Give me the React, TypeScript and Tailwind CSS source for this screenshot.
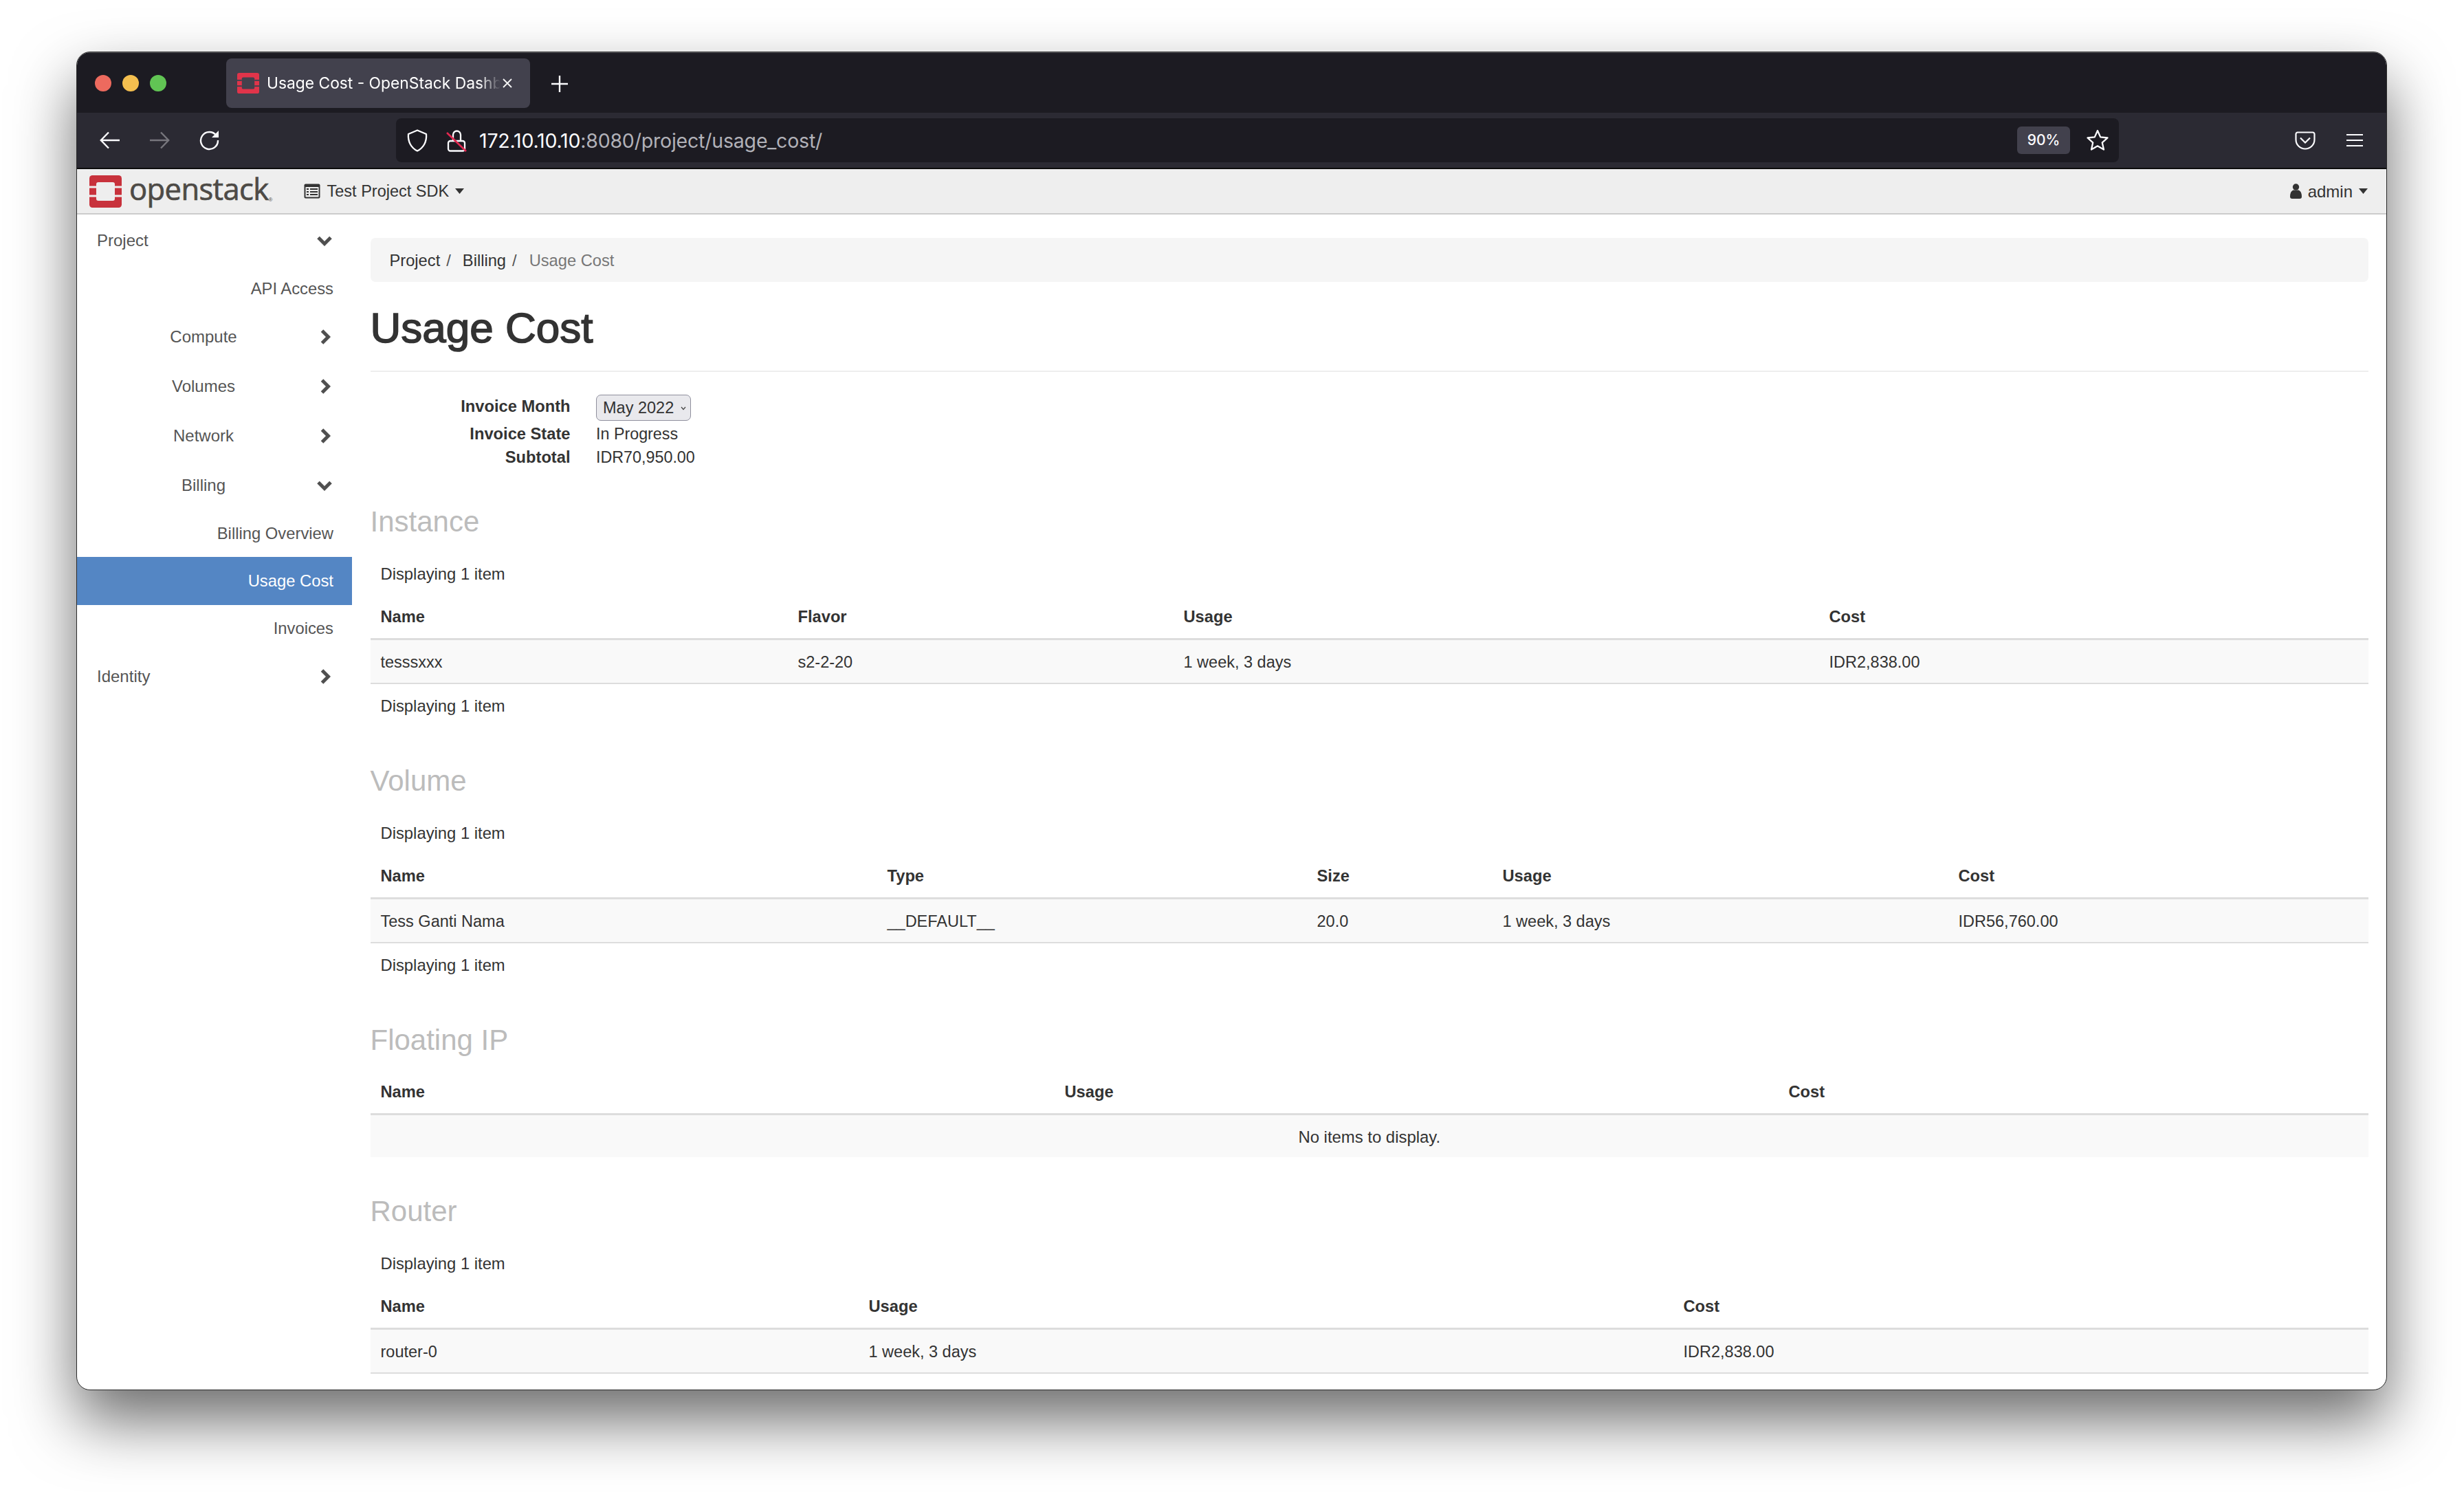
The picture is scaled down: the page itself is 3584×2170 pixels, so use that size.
import React from "react";

const Chevron = ({ dir }: { dir: "down" | "right" }) =>
  dir === "down" ? (
    <svg width="24" height="16" viewBox="0 0 24 16" className="ml-[-20px]">
      <path d="M3 3.5 L12 12.5 L21 3.5" fill="none" stroke="#4f4f4f" strokeWidth="5" />
    </svg>
  ) : (
    <svg width="16" height="24" viewBox="0 0 16 24" className="ml-[-15px]">
      <path d="M3.5 3 L12.5 12 L3.5 21" fill="none" stroke="#4f4f4f" strokeWidth="5" />
    </svg>
  );

const NavGroup = ({ label, dir, left }: { label: string; dir: "down" | "right"; left?: boolean }) => (
  <div className="h-[72px] flex items-center text-[24px] text-[#555555]">
    <div className={left ? "w-[368px] pl-[29px]" : "w-[368px] text-center"}>{label}</div>
    <Chevron dir={dir} />
  </div>
);

const NavLeaf = ({ label, active, h }: { label: string; active?: boolean; h: string }) => (
  <div
    className={`${h} flex items-center justify-end pr-[27px] text-[23.8px] ${
      active ? "bg-[#5486c4] text-white" : "text-[#555555]"
    }`}
  >
    {label}
  </div>
);

const Heading = ({ children, pt }: { children: React.ReactNode; pt: string }) => (
  <div className={`${pt} pb-[8px]`}>
    <h3 className="h-[72px] leading-[74px] text-[42px] text-[#bcbcbc]">{children}</h3>
  </div>
);

const Note = ({ h }: { h: string }) => (
  <div className={`${h} flex items-center pl-[15px] pt-[4px] text-[23.8px] text-[#333333]`}>Displaying 1 item</div>
);

const Table = ({ cols, head, row }: { cols: string; head: string[]; row: string[] }) => (
  <div>
    <div className={`h-[64px] grid ${cols} items-center px-[15px] pt-[4px] font-bold text-[23.7px] text-[#333333]`}>
      {head.map((t) => (
        <div key={t}>{t}</div>
      ))}
    </div>
    <div className="h-[3px] bg-[#dddddd]" />
    <div className={`h-[64px] grid ${cols} items-center px-[15px] pt-[3px] text-[23.5px] text-[#333333] bg-[#f9f9f9] border-b-2 border-[#dddddd]`}>
      {row.map((t) => (
        <div key={t}>{t}</div>
      ))}
    </div>
  </div>
);

const Logo = ({ color, hole, cls }: { color: string; hole: string; cls: string }) => (
  <svg viewBox="0 0 47 47" className={cls} preserveAspectRatio="none">
    <rect width="47" height="47" rx="4.5" fill={color} />
    <rect x="10" y="10" width="27" height="27" rx="3" fill={hole} />
    <rect x="0" y="15.5" width="10" height="3" fill={hole} />
    <rect x="0" y="28.5" width="10" height="3" fill={hole} />
    <rect x="37" y="15.5" width="10" height="3" fill={hole} />
    <rect x="37" y="28.5" width="10" height="3" fill={hole} />
  </svg>
);

const Caret = () => (
  <svg width="13" height="8" viewBox="0 0 13 8">
    <path d="M0 0 H13 L6.5 8 Z" fill="#333333" />
  </svg>
);

export default function App() {
  return (
    <div className="w-[3584px] h-[2170px] overflow-hidden bg-white pt-[75px] pl-[111px] font-['Liberation_Sans',Arial,sans-serif]">
      <div className="w-[3361px] h-[1947px] rounded-[20px] overflow-hidden flex flex-col bg-white border-[1.5px] border-[#2a2a2a] shadow-[0_44px_90px_rgba(0,0,0,0.58)]">
        {/* Tab strip */}
        <div className="h-[88px] shrink-0 bg-[#1c1b22] border-t-[1.5px] border-[#5a5a5e] flex items-start font-['Inter',sans-serif] text-white">
          <div className="flex items-center gap-[16px] pl-[26px] pt-[32px]">
            <span className="w-[24px] h-[24px] rounded-full bg-[#ed6a5e]" />
            <span className="w-[24px] h-[24px] rounded-full bg-[#f4bf4f]" />
            <span className="w-[24px] h-[24px] rounded-full bg-[#61c554]" />
          </div>
          <div className="ml-[87px] mt-[8px] w-[442px] h-[72px] rounded-[8px] bg-[#42414d] flex items-center pl-[16px]">
            <Logo color="#e0344a" hole="#42414d" cls="w-[32px] h-[30px] shrink-0" />
            <div className="ml-[11px] w-[340px] overflow-hidden whitespace-nowrap text-[22.8px] [mask-image:linear-gradient(to_right,black_91%,transparent)]">
              Usage Cost - OpenStack Dashboard
            </div>
            <svg width="16" height="16" viewBox="0 0 16 16" className="ml-[2px] shrink-0">
              <path d="M2 2 L14 14 M14 2 L2 14" stroke="#f5f5f5" strokeWidth="1.8" />
            </svg>
          </div>
          <svg width="26" height="26" viewBox="0 0 26 26" className="ml-[30px] mt-[32px]">
            <path d="M13 1 V25 M1 13 H25" stroke="#fbfbfe" strokeWidth="2.4" />
          </svg>
        </div>
        {/* Nav bar */}
        <div className="h-[80px] shrink-0 bg-[#2b2a33] flex items-center font-['Inter',sans-serif] text-[#fbfbfe] relative">
          <svg width="30" height="26" viewBox="0 0 30 26" className="ml-[33px]">
            <path d="M29 13 H2 M13 1.5 L1.8 13 L13 24.5" fill="none" stroke="#fbfbfe" strokeWidth="2.4" />
          </svg>
          <svg width="30" height="26" viewBox="0 0 30 26" className="ml-[42px]">
            <path d="M1 13 H28 M17 1.5 L28.2 13 L17 24.5" fill="none" stroke="#77767d" strokeWidth="2.4" />
          </svg>
          <svg width="30" height="30" viewBox="0 0 30 30" className="ml-[42px]">
            <path d="M25.5 8 A12.5 12.5 0 1 0 28 15" fill="none" stroke="#fbfbfe" strokeWidth="2.4" />
            <path d="M29 1 V11 H19 Z" fill="#fbfbfe" />
          </svg>
          {/* address bar */}
          <div className="ml-[257px] w-[2506px] h-[64px] rounded-[8px] bg-[#1c1b22] flex items-center">
            <svg width="30" height="33" viewBox="0 0 30 33" className="ml-[16px]">
              <path d="M15 1.5 L28 7 C29 18 24 27 15 31.5 C6 27 1 18 2 7 Z" fill="none" stroke="#fbfbfe" strokeWidth="2.3" strokeLinejoin="round" />
            </svg>
            <svg width="30" height="33" viewBox="0 0 30 33" className="ml-[27px]">
              <path d="M10 17 V8 A5.5 5.5 0 0 1 21 8 V17" fill="none" stroke="#fbfbfe" strokeWidth="2.3" />
              <rect x="3" y="17" width="24" height="14.5" rx="3" fill="none" stroke="#fbfbfe" strokeWidth="2.3" />
              <path d="M1 5 L29 32" stroke="#e22850" strokeWidth="2.6" />
            </svg>
            <div className="ml-[18px] mt-[3px] text-[28.5px] tracking-[-0.2px] whitespace-nowrap">
              172.10.10.10<span className="text-[#b1b1b8]">:8080/project/usage_cost/</span>
            </div>
            <div className="flex-1" />
            <div className="w-[77px] h-[40px] rounded-[6px] bg-[#42414d] flex items-center justify-center text-[21px] font-medium">90%</div>
            <svg width="34" height="32" viewBox="0 0 34 32" className="ml-[23px] mr-[14px]">
              <path d="M17 2 L21.2 11.4 L31.5 12.5 L23.8 19.4 L26 29.5 L17 24.3 L8 29.5 L10.2 19.4 L2.5 12.5 L12.8 11.4 Z" fill="none" stroke="#fbfbfe" strokeWidth="2.3" strokeLinejoin="round" />
            </svg>
          </div>
          <svg width="30" height="27" viewBox="0 0 30 27" className="ml-[256px]">
            <path d="M4 1.5 H26 A2.5 2.5 0 0 1 28.5 4 V12 C28.5 20 22 25.5 15 25.5 C8 25.5 1.5 20 1.5 12 V4 A2.5 2.5 0 0 1 4 1.5 Z" fill="none" stroke="#fbfbfe" strokeWidth="2.2" />
            <path d="M8 9.5 L15 16.5 L22 9.5" fill="none" stroke="#fbfbfe" strokeWidth="2.2" />
          </svg>
          <svg width="26" height="20" viewBox="0 0 26 20" className="ml-[44px]">
            <path d="M1 2 H25 M1 10 H25 M1 18 H25" stroke="#fbfbfe" strokeWidth="2.2" />
          </svg>
        </div>
        <div className="h-[2px] shrink-0 bg-[#0c0c0d]" />
        {/* App header */}
        <div className="h-[66px] shrink-0 bg-[#eeeeee] border-b-2 border-[#cccccc] flex items-center text-[23.5px] text-[#333333]">
          <Logo color="#c8323c" hole="#eeeeee" cls="ml-[18px] w-[47px] h-[47px]" />
          <span className="ml-[11px] text-[43.5px] leading-none tracking-[-0.6px] text-[#4d4a46] [-webkit-text-stroke:0.7px_#4d4a46] font-['Open_Sans',sans-serif] -mt-[6px]">openstack</span>
          <span className="text-[8px] text-[#4d4a46] mt-[26px]">®</span>
          <svg width="24" height="22" viewBox="0 0 24 22" className="ml-[45px]">
            <rect x="0.5" y="0.5" width="23" height="21" rx="2" fill="#333333" />
            <rect x="2.5" y="5" width="19" height="14.5" fill="#eeeeee" />
            <path d="M4 8 H7 M9 8 H20 M4 12 H7 M9 12 H20 M4 16 H7 M9 16 H20" stroke="#333333" strokeWidth="2" />
          </svg>
          <span className="ml-[10px] mt-[2px]">Test Project SDK</span>
          <span className="ml-[9px]"><Caret /></span>
          <div className="flex-1" />
          <svg width="17" height="22" viewBox="0 0 17 22">
            <circle cx="8.5" cy="5" r="4.7" fill="#333333" />
            <path d="M0 19 C0 12 3 10 5 9.5 L12 9.5 C14 10 17 12 17 19 Q17 22 14 22 H3 Q0 22 0 19 Z" fill="#333333" />
          </svg>
          <span className="ml-[9px] mt-[2px] text-[24px]">admin</span>
          <span className="ml-[9px] mr-[27px]"><Caret /></span>
        </div>
        {/* Body */}
        <div className="flex-1 flex min-h-0">
          <aside className="w-[400px] shrink-0 pt-[2px]">
            <NavGroup label="Project" dir="down" left />
            <NavLeaf label="API Access" h="h-[68px]" />
            <NavGroup label="Compute" dir="right" />
            <NavGroup label="Volumes" dir="right" />
            <NavGroup label="Network" dir="right" />
            <NavGroup label="Billing" dir="down" />
            <NavLeaf label="Billing Overview" h="h-[68px]" />
            <NavLeaf label="Usage Cost" active h="h-[70px]" />
            <NavLeaf label="Invoices" h="h-[68px]" />
            <NavGroup label="Identity" dir="right" left />
          </aside>
          <main className="flex-1 min-w-0 pl-[26.5px] pr-[26px] pt-[34px]">
            <div className="h-[64px] rounded-[7px] bg-[#f5f5f5] flex items-center pl-[28px] pt-[4px] text-[23.7px] text-[#333333]">
              <span>Project</span>
              <span className="ml-[9px] text-[#555555]">/</span>
              <span className="ml-[17px]">Billing</span>
              <span className="ml-[9px] text-[#555555]">/</span>
              <span className="ml-[18px] text-[#777777]">Usage Cost</span>
            </div>
            <div className="h-[131px] border-b-2 border-[#eeeeee] pt-[35px]">
              <h1 className="h-[64px] leading-[64px] text-[62px] text-[#333333] [-webkit-text-stroke:1.6px_#333333]">Usage Cost</h1>
            </div>
            <div className="pt-[32px] text-[23.3px] text-[#333333]">
              <div className="h-[40px] flex items-center">
                <div className="w-[291px] text-right font-bold text-[23.7px] -mt-[2px]">Invoice Month</div>
                <div className="ml-[37.5px] w-[138px] h-[38px] rounded-[7px] bg-[#e9e9ed] border-[1.5px] border-[#8f8f9d] flex items-center pl-[9px] pt-[2px] text-[23.5px]">
                  May 2022
                  <svg width="8" height="6" viewBox="0 0 8 6" className="ml-[10px]">
                    <path d="M1 1 L4 4.5 L7 1" fill="none" stroke="#444444" strokeWidth="1.2" />
                  </svg>
                </div>
              </div>
              <div className="h-[34px] flex items-center pt-[3px]">
                <div className="w-[291px] text-right font-bold text-[23.7px]">Invoice State</div>
                <div className="ml-[37.5px]">In Progress</div>
              </div>
              <div className="h-[34px] flex items-center pt-[3px]">
                <div className="w-[291px] text-right font-bold text-[23.7px]">Subtotal</div>
                <div className="ml-[37.5px]">IDR70,950.00</div>
              </div>
            </div>

            <Heading pt="pt-[41px]">Instance</Heading>
            <Note h="h-[62px]" />
            <Table
              cols="grid-cols-[607px_561px_939px_1fr]"
              head={["Name", "Flavor", "Usage", "Cost"]}
              row={["tesssxxx", "s2-2-20", "1 week, 3 days", "IDR2,838.00"]}
            />
            <Note h="h-[60px]" />

            <Heading pt="pt-[44px]">Volume</Heading>
            <Note h="h-[62px]" />
            <Table
              cols="grid-cols-[737px_625px_270px_663px_1fr]"
              head={["Name", "Type", "Size", "Usage", "Cost"]}
              row={["Tess Ganti Nama", "__DEFAULT__", "20.0", "1 week, 3 days", "IDR56,760.00"]}
            />
            <Note h="h-[60px]" />

            <Heading pt="pt-[44px]">Floating IP</Heading>
            <div className="h-[63px] grid grid-cols-[995px_1053px_1fr] items-center px-[15px] pt-[2px] font-bold text-[23.7px] text-[#333333]">
              <div>Name</div>
              <div>Usage</div>
              <div>Cost</div>
            </div>
            <div className="h-[3px] bg-[#dddddd]" />
            <div className="h-[61px] flex items-center justify-center pt-[3px] bg-[#f9f9f9] text-[23.9px] text-[#333333]">No items to display.</div>

            <Heading pt="pt-[42px]">Router</Heading>
            <Note h="h-[62px]" />
            <Table
              cols="grid-cols-[710px_1185px_1fr]"
              head={["Name", "Usage", "Cost"]}
              row={["router-0", "1 week, 3 days", "IDR2,838.00"]}
            />
          </main>
        </div>
      </div>
    </div>
  );
}
